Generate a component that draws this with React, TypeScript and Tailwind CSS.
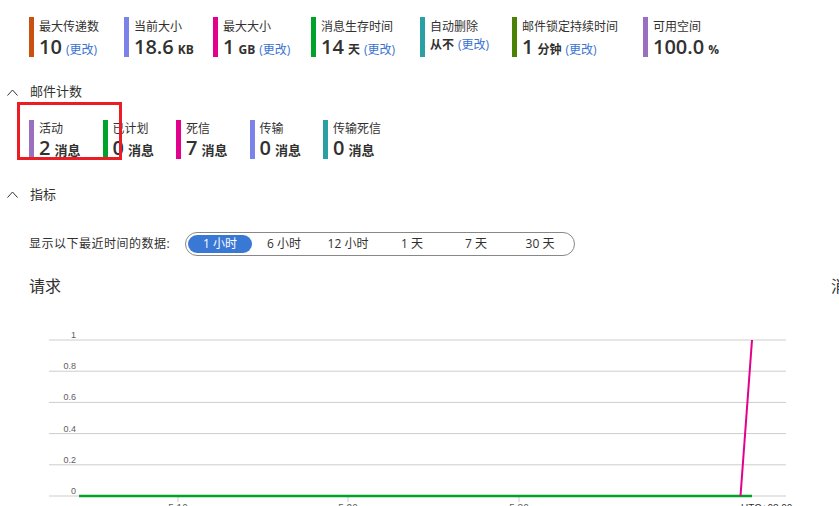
import React from 'react';

const topStats = [
  { label: '最大传递数', value: '10', unit: '', edit: true, color: 'bg-[#ca5010]', w: 'w-[95px]' },
  { label: '当前大小', value: '18.6', unit: 'KB', edit: false, color: 'bg-[#7b83eb]', w: 'w-[89px]' },
  { label: '最大大小', value: '1', unit: 'GB', edit: true, color: 'bg-[#e3008c]', w: 'w-[98px]' },
  { label: '消息生存时间', value: '14', unit: '天', edit: true, color: 'bg-[#00a32a]', w: 'w-[109px]' },
  { label: '自动删除', value: '', unit: '从不', edit: true, color: 'bg-[#2aa0a4]', w: 'w-[92px]' },
  { label: '邮件锁定持续时间', value: '1', unit: '分钟', edit: true, color: 'bg-[#498205]', w: 'w-[131px]' },
  { label: '可用空间', value: '100.0', unit: '%', edit: false, color: 'bg-[#9a6fbf]', w: 'w-[110px]' },
];

const counts = [
  { label: '活动', value: '2', color: 'bg-[#9a6fbf]' },
  { label: '已计划', value: '0', color: 'bg-[#00a32a]' },
  { label: '死信', value: '7', color: 'bg-[#e3008c]' },
  { label: '传输', value: '0', color: 'bg-[#7b83eb]' },
  { label: '传输死信', value: '0', color: 'bg-[#2aa0a4]' },
];

const ranges = ['1 小时', '6 小时', '12 小时', '1 天', '7 天', '30 天'];

function Chevron() {
  return (
    <svg width="11" height="7" viewBox="0 0 11 7" className="mr-[12px]">
      <polyline points="0.5,6.5 5.5,1 10.5,6.5" fill="none" stroke="#323130" strokeWidth="1" />
    </svg>
  );
}

function SectionHeader({ title }: { title: string }) {
  return (
    <div className="flex items-center h-[20px] pl-[7px] text-[13px] text-[#323130]">
      <Chevron />
      <span>{title}</span>
    </div>
  );
}

function RequestChart() {
  const ys = [43, 74.2, 105.4, 136.6, 167.8, 199];
  const labels = ['1', '0.8', '0.6', '0.4', '0.2', '0'];
  return (
    <svg width="839" height="220" viewBox="0 0 839 220" className="block">
      {ys.map((y, i) => (
        <g key={i}>
          <line x1="49" x2="786" y1={y} y2={y} stroke="#cfcdcb" strokeWidth="1" />
          <text x="76" y={y - 2} textAnchor="end" fontSize="9" fill="#605e5c" fontFamily="Liberation Sans, sans-serif">
            {labels[i]}
          </text>
        </g>
      ))}
      {[178, 348, 519].map((x) => (
        <line key={x} x1={x} x2={x} y1="200" y2="205" stroke="#cfcdcb" strokeWidth="1" />
      ))}
      {[
        { x: 178, t: '5:10' },
        { x: 348, t: '5:20' },
        { x: 519, t: '5:30' },
      ].map((l) => (
        <text key={l.x} x={l.x} y="215" textAnchor="middle" fontSize="10" fill="#605e5c" fontFamily="Liberation Sans, sans-serif">
          {l.t}
        </text>
      ))}
      <text x="741" y="215" fontSize="10" fill="#323130" fontFamily="Liberation Sans, sans-serif">UTC+08:00</text>
      <line x1="79" x2="752" y1="199" y2="199" stroke="#00a32a" strokeWidth="2.5" />
      <line x1="740.5" y1="199" x2="752" y2="43" stroke="#e3008c" strokeWidth="2" />
    </svg>
  );
}

export default function App() {
  return (
    <div className="relative w-[839px] h-[506px] overflow-hidden bg-white text-[#323130] font-['Open_Sans','Noto_Sans_CJK_SC',sans-serif]">
      {/* top stats */}
      <div className="flex pt-[17px] pl-[29px]">
        {topStats.map((s) => (
          <div key={s.label} className={`flex shrink-0 ${s.w}`}>
            <div className={`w-[5px] h-[40px] ${s.color}`} />
            <div className="ml-[5px] flex flex-col">
              <div className="text-[12px] leading-[16px] mt-[2px] whitespace-nowrap">{s.label}</div>
              <div className="flex items-baseline whitespace-nowrap mt-[1px]">
                {s.value && <span className="text-[20px] leading-[22px] font-semibold">{s.value}</span>}
                {s.unit && (
                  <span className={`text-[12px] font-bold ${s.value ? 'ml-[4px]' : ''}`}>{s.unit}</span>
                )}
                {s.edit && <span className="text-[12px] text-[#3a73d0] ml-[4px]">(更改)</span>}
              </div>
            </div>
          </div>
        ))}
      </div>

      <div className="mt-[23px]">
        <SectionHeader title="邮件计数" />
      </div>

      {/* message counts */}
      <div className="flex pl-[29px] mt-[18px]">
        {counts.map((c) => (
          <div key={c.label} className="flex shrink-0 w-[73.5px]">
            <div className={`w-[5px] h-[39px] ${c.color}`} />
            <div className="ml-[5px] flex flex-col">
              <div className="text-[12px] leading-[16px] mt-[1px] whitespace-nowrap">{c.label}</div>
              <div className="flex items-baseline whitespace-nowrap">
                <span className="text-[20px] leading-[22px] font-semibold">{c.value}</span>
                <span className="text-[13px] font-bold ml-[4px]">消息</span>
              </div>
            </div>
          </div>
        ))}
      </div>

      <div className="mt-[24px]">
        <SectionHeader title="指标" />
      </div>

      {/* time range */}
      <div className="flex items-center pl-[29px] mt-[27px]">
        <span className="text-[12px] w-[156px] shrink-0 tracking-[0.5px] whitespace-nowrap">显示以下最近时间的数据:</span>
        <div className="flex items-center h-[24px] border border-[#8a8886] rounded-full px-[2px]">
          {ranges.map((r, i) => (
            <div
              key={r}
              className={`w-[64px] h-[18px] flex items-center justify-center text-[12px] rounded-full whitespace-nowrap ${
                i === 0 ? 'bg-[#3a78d6] text-white' : 'text-[#323130]'
              }`}
            >
              {r}
            </div>
          ))}
        </div>
      </div>

      {/* chart titles */}
      <div className="flex mt-[19px] pl-[29px] text-[16px] leading-[22px] whitespace-nowrap">
        <div className="w-[802px] shrink-0">请求</div>
        <div className="shrink-0">消息</div>
      </div>

      <RequestChart />

      {/* highlight box */}
      <div className="absolute left-[17px] top-[102px] w-[105px] h-[58px] border-[3px] border-[#ec1c24]" />
    </div>
  );
}
